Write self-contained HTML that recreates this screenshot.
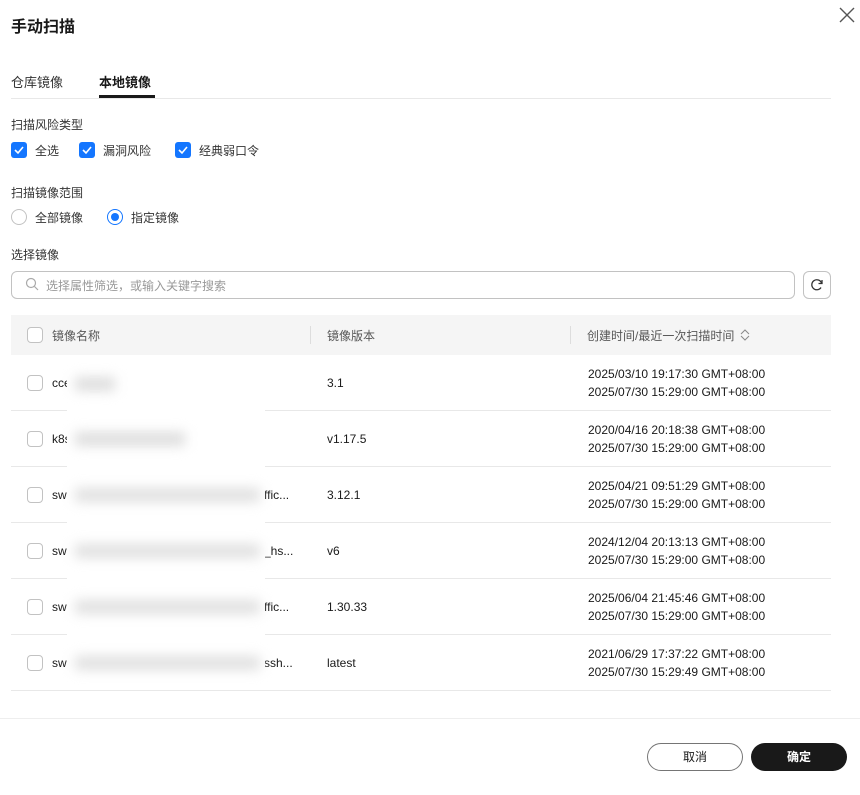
<!DOCTYPE html><html><head><meta charset="utf-8"><style>
*{box-sizing:border-box;margin:0;padding:0}
body{width:860px;height:795px;background:#fff;font-family:"Liberation Sans","Noto Sans CJK SC",sans-serif;color:#191919;position:relative;overflow:hidden;font-size:12px}
.a{position:absolute;white-space:nowrap}
.cb{position:absolute;width:16px;height:16px;border-radius:3px;background:#1476ff}
.cb svg{position:absolute;left:2px;top:2px}
.ec{position:absolute;width:16px;height:16px;border-radius:4px;border:1px solid #c2c2c2;background:#fff}
.row{position:absolute;left:11px;width:820px;height:56px;border-bottom:1px solid #e8e8e8}
.t{font-size:12px;line-height:18px}
</style></head><body>
<div class="a" style="left:11px;top:13px;font-size:16px;font-weight:bold">手动扫描</div>
<svg class="a" style="left:838px;top:6px" width="18" height="18" viewBox="0 0 18 18"><path d="M2 2L16 16M16 2L2 16" stroke="#555" stroke-width="1.4"/></svg>
<div class="a" style="left:11px;top:72px;font-size:13px;color:#333">仓库镜像</div>
<div class="a" style="left:99px;top:72px;font-size:13px;font-weight:bold">本地镜像</div>
<div class="a" style="left:99px;top:95px;width:56px;height:3px;background:#191919"></div>
<div class="a" style="left:11px;top:98px;width:820px;height:1px;background:#e8e8e8"></div>
<div class="a" style="left:11px;top:116px;color:#333">扫描风险类型</div>
<div class="cb" style="left:11px;top:142px"><svg width="12" height="12"><path d="M2 6l3 3 5-6" stroke="#fff" stroke-width="1.6" fill="none"/></svg></div>
<div class="a" style="left:35px;top:142px;color:#333">全选</div>
<div class="cb" style="left:79px;top:142px"><svg width="12" height="12"><path d="M2 6l3 3 5-6" stroke="#fff" stroke-width="1.6" fill="none"/></svg></div>
<div class="a" style="left:103px;top:142px;color:#333">漏洞风险</div>
<div class="cb" style="left:175px;top:142px"><svg width="12" height="12"><path d="M2 6l3 3 5-6" stroke="#fff" stroke-width="1.6" fill="none"/></svg></div>
<div class="a" style="left:199px;top:142px;color:#333">经典弱口令</div>
<div class="a" style="left:11px;top:184px;color:#333">扫描镜像范围</div>
<div class="a" style="left:11px;top:209px;width:16px;height:16px;border-radius:50%;border:1px solid #c2c2c2"></div>
<div class="a" style="left:35px;top:209px;color:#333">全部镜像</div>
<div class="a" style="left:107px;top:209px;width:16px;height:16px;border-radius:50%;border:1px solid #1476ff"><div style="position:absolute;left:3px;top:3px;width:8px;height:8px;border-radius:50%;background:#1476ff"></div></div>
<div class="a" style="left:131px;top:209px;color:#333">指定镜像</div>
<div class="a" style="left:11px;top:246px;color:#333">选择镜像</div>
<div class="a" style="left:11px;top:271px;width:784px;height:28px;border:1px solid #c2c2c2;border-radius:6px"></div>
<svg class="a" style="left:25px;top:277px" width="14" height="14"><circle cx="6" cy="6" r="4.5" stroke="#aaa" stroke-width="1.2" fill="none"/><path d="M9.5 9.5L13 13" stroke="#aaa" stroke-width="1.2"/></svg>
<div class="a" style="left:46px;top:277px;color:#999">选择属性筛选，或输入关键字搜索</div>
<div class="a" style="left:803px;top:271px;width:28px;height:28px;border:1px solid #c2c2c2;border-radius:6px"></div>
<svg class="a" style="left:809px;top:277px" width="16" height="16"><path d="M12.5 6A5 5 0 1 0 12 10.5" stroke="#333" stroke-width="1.3" fill="none"/><path d="M13 3v3.5h-3.5" stroke="#333" stroke-width="1.3" fill="none"/></svg>
<div class="a" style="left:11px;top:315px;width:820px;height:40px;background:#f5f5f5"></div>
<div class="ec" style="left:27px;top:327px"></div>
<div class="a" style="left:52px;top:327px;color:#575757">镜像名称</div>
<div class="a" style="left:310px;top:326px;width:1px;height:18px;background:#ddd"></div>
<div class="a" style="left:327px;top:327px;color:#575757">镜像版本</div>
<div class="a" style="left:570px;top:326px;width:1px;height:18px;background:#ddd"></div>
<div class="a" style="left:587px;top:327px;color:#575757">创建时间/最近一次扫描时间</div>
<svg class="a" style="left:740px;top:328px" width="10" height="14"><path d="M1 6l4-4 4 4M1 8l4 4 4-4" stroke="#888" fill="none"/></svg>

<div class="row" style="top:355px"></div><div class="row" style="top:411px"></div><div class="row" style="top:467px"></div><div class="row" style="top:523px"></div><div class="row" style="top:579px"></div><div class="row" style="top:635px"></div>

<div class="ec" style="left:27px;top:375px"></div><div class="a t" style="left:52px;top:374px">cce</div><div class="a t" style="left:327px;top:374px">3.1</div><div class="a t" style="left:588px;top:365px">2025/03/10 19:17:30 GMT+08:00<br>2025/07/30 15:29:00 GMT+08:00</div>
<div class="ec" style="left:27px;top:431px"></div><div class="a t" style="left:52px;top:430px">k8s</div><div class="a t" style="left:327px;top:430px">v1.17.5</div><div class="a t" style="left:588px;top:421px">2020/04/16 20:18:38 GMT+08:00<br>2025/07/30 15:29:00 GMT+08:00</div>
<div class="ec" style="left:27px;top:487px"></div><div class="a t" style="left:52px;top:486px">sw</div><div class="a t" style="left:264px;top:486px">ffic...</div><div class="a t" style="left:327px;top:486px">3.12.1</div><div class="a t" style="left:588px;top:477px">2025/04/21 09:51:29 GMT+08:00<br>2025/07/30 15:29:00 GMT+08:00</div>
<div class="ec" style="left:27px;top:543px"></div><div class="a t" style="left:52px;top:542px">sw</div><div class="a t" style="left:264px;top:542px">_hs...</div><div class="a t" style="left:327px;top:542px">v6</div><div class="a t" style="left:588px;top:533px">2024/12/04 20:13:13 GMT+08:00<br>2025/07/30 15:29:00 GMT+08:00</div>
<div class="ec" style="left:27px;top:599px"></div><div class="a t" style="left:52px;top:598px">sw</div><div class="a t" style="left:264px;top:598px">ffic...</div><div class="a t" style="left:327px;top:598px">1.30.33</div><div class="a t" style="left:588px;top:589px">2025/06/04 21:45:46 GMT+08:00<br>2025/07/30 15:29:00 GMT+08:00</div>
<div class="ec" style="left:27px;top:655px"></div><div class="a t" style="left:52px;top:654px">sw</div><div class="a t" style="left:264px;top:654px">ssh...</div><div class="a t" style="left:327px;top:654px">latest</div><div class="a t" style="left:588px;top:645px">2021/06/29 17:37:22 GMT+08:00<br>2025/07/30 15:29:49 GMT+08:00</div>

<div class="a" style="left:67px;top:372px;width:56px;height:30px;background:#fff"></div>
<div class="a" style="left:67px;top:407px;width:198px;height:279px;background:#fff"></div>
<div class="a" style="left:75px;top:377px;width:40px;height:14px;background:#ddd;filter:blur(6px)"></div>
<div class="a" style="left:75px;top:432px;width:110px;height:14px;background:#ddd;filter:blur(6px)"></div>
<div class="a" style="left:75px;top:488px;width:185px;height:14px;background:#e0e0e0;filter:blur(6px)"></div>
<div class="a" style="left:75px;top:544px;width:185px;height:14px;background:#e0e0e0;filter:blur(6px)"></div>
<div class="a" style="left:75px;top:600px;width:185px;height:14px;background:#e0e0e0;filter:blur(6px)"></div>
<div class="a" style="left:75px;top:656px;width:185px;height:14px;background:#e0e0e0;filter:blur(6px)"></div>

<div class="a" style="left:0;top:718px;width:860px;height:1px;background:#eee"></div>
<div class="a" style="left:647px;top:743px;width:96px;height:28px;border:1px solid #757575;border-radius:14px;text-align:center;line-height:26px">取消</div>
<div class="a" style="left:751px;top:743px;width:96px;height:28px;background:#191919;color:#fff;border-radius:14px;text-align:center;line-height:28px;font-weight:bold">确定</div>
</body></html>
